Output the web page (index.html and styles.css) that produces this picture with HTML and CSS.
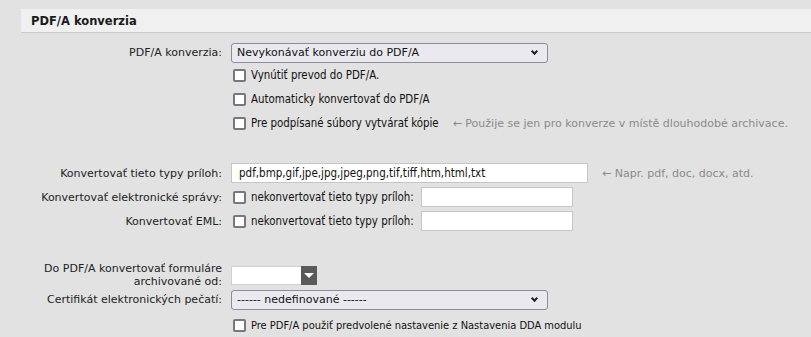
FILE: index.html
```html
<!DOCTYPE html>
<html lang="sk">
<head>
  <meta charset="UTF-8">
  <title>PDF/A konverzia</title>
  <link rel="stylesheet" href="styles.css">
</head>
<body>
  <div class="panel">
    <!-- Hlavička sekcie -->
    <div class="panel-head">PDF/A konverzia</div>

    <div class="form">
      <div class="row row-select">
        <label class="lbl">PDF/A konverzia:</label>
        <div class="ctrl">
          <div class="select wide">Nevykonávať konverziu do PDF/A<span class="chev"></span></div>
        </div>
      </div>
      <div class="row row-check">
        <span class="lbl"></span>
        <div class="ctrl"><span class="cb"></span><span class="cb-text">Vynútiť prevod do PDF/A.</span></div>
      </div>
      <div class="row row-check">
        <span class="lbl"></span>
        <div class="ctrl"><span class="cb"></span><span class="cb-text">Automaticky konvertovať do PDF/A</span></div>
      </div>
      <div class="row row-check">
        <span class="lbl"></span>
        <div class="ctrl"><span class="cb"></span><span class="cb-text">Pre podpísané súbory vytvárať kópie</span>
          <span class="hint hint-far">&larr; Použije se jen pro konverze v místě dlouhodobé archivace.</span></div>
      </div>

      <div class="spacer"></div>

      <div class="row row-input">
        <label class="lbl">Konvertovať tieto typy príloh:</label>
        <div class="ctrl">
          <div class="input types">pdf,bmp,gif,jpe,jpg,jpeg,png,tif,tiff,htm,html,txt</div>
          <span class="hint">&larr; Napr. pdf, doc, docx, atd.</span>
        </div>
      </div>
      <div class="row row-input">
        <label class="lbl">Konvertovať elektronické správy:</label>
        <div class="ctrl"><span class="cb"></span><span class="cb-text">nekonvertovať tieto typy príloh:</span>
          <div class="input small"></div></div>
      </div>
      <div class="row row-input">
        <label class="lbl">Konvertovať EML:</label>
        <div class="ctrl"><span class="cb"></span><span class="cb-text">nekonvertovať tieto typy príloh:</span>
          <div class="input small"></div></div>
      </div>

      <div class="spacer2"></div>

      <div class="row row-date">
        <div class="lbl-two">
          <span>Do PDF/A konvertovať formuláre</span>
          <span>archivované od:</span>
        </div>
        <div class="ctrl">
          <div class="combo"><span class="combo-field"></span><span class="combo-btn"><span class="tri"></span></span></div>
        </div>
      </div>
      <div class="row row-select">
        <label class="lbl">Certifikát elektronických pečatí:</label>
        <div class="ctrl">
          <div class="select wide">------ nedefinované ------<span class="chev"></span></div>
        </div>
      </div>
      <div class="row row-last">
        <span class="lbl"></span>
        <div class="ctrl"><span class="cb"></span><span class="cb-text last">Pre PDF/A použiť predvolené nastavenie z Nastavenia DDA modulu</span></div>
      </div>
    </div>
  </div>
</body>
</html>
```

FILE: styles.css
```css
* { box-sizing: border-box; }
body {
  margin: 0;
  background: #e2e2e2;
  font-family: 'DejaVu Sans', sans-serif;
  font-size: 11px;
  color: #222;
}
.panel {
  padding: 9px 0 0 21px;
}
.panel-head {
  height: 24px;
  background: #f0f0f0;
  border-bottom: 1px solid #c9c9c9;
  padding: 5px 0 0 10px;
  font-weight: bold;
  font-size: 11.5px;
  color: #1a1a1a;
}
.form {
  padding-top: 9px;
}
.row {
  display: grid;
  grid-template-columns: 201px 1fr;
  column-gap: 9px;
  align-items: center;
}
.row-select { height: 21px; }
.row-check { height: 24px; }
.row-input { height: 24px; }
.row-date { height: 28px; }
.row-last { height: 30px; }
.lbl {
  text-align: right;
  color: #222;
}
.lbl-two {
  display: flex;
  flex-direction: column;
  align-items: flex-end;
  line-height: 13px;
  color: #222;
  white-space: nowrap;
}
.ctrl {
  display: flex;
  align-items: center;
}
/* Selecty */
.select {
  position: relative;
  height: 20px;
  border: 1px solid #8d8d9a;
  border-radius: 3px;
  background: #e9e9ef;
  padding: 2px 0 0 5px;
  color: #111;
}
.select.wide { width: 317px; }
.chev {
  position: absolute;
  right: 10px;
  top: 5px;
  width: 5px;
  height: 5px;
  border-right: 2px solid #222;
  border-bottom: 2px solid #222;
  transform: rotate(45deg);
}
/* Checkboxy */
.cb {
  width: 13px;
  height: 13px;
  margin-left: 2px;
  border: 2px solid #77777f;
  border-radius: 2px;
  background: #fff;
  flex: none;
}
.cb-text {
  margin-left: 5px;
  font-family: 'DejaVu Sans Condensed', 'DejaVu Sans', sans-serif;
  font-size: 11.4px;
  color: #111;
  white-space: nowrap;
}
.cb-text.last { font-size: 11px; }
.hint {
  color: #8a8a8a;
  margin-left: 14px;
  white-space: nowrap;
}
.hint-far { margin-left: 14px; }
.spacer { height: 26px; }
.spacer2 { height: 28px; }
/* Textové polia */
.input {
  height: 20px;
  background: #fff;
  border: 1px solid #c6c6c6;
  padding: 2px 0 0 7px;
  font-family: 'DejaVu Sans Condensed', 'DejaVu Sans', sans-serif;
  font-size: 11.5px;
  color: #111;
}
.input.types { width: 357px; }
.input.small { width: 152px; margin-left: 7px; }
/* Datum */
.combo {
  display: flex;
  height: 19px;
}
.combo-field {
  width: 70px;
  background: #fff;
  border: 1px solid #d0d0d0;
  border-right: none;
}
.combo-btn {
  width: 16px;
  background: #5a5a5a;
  display: flex;
  align-items: center;
  justify-content: center;
}
.tri {
  width: 0;
  height: 0;
  border-left: 5px solid transparent;
  border-right: 5px solid transparent;
  border-top: 5px solid #fff;
}
```
